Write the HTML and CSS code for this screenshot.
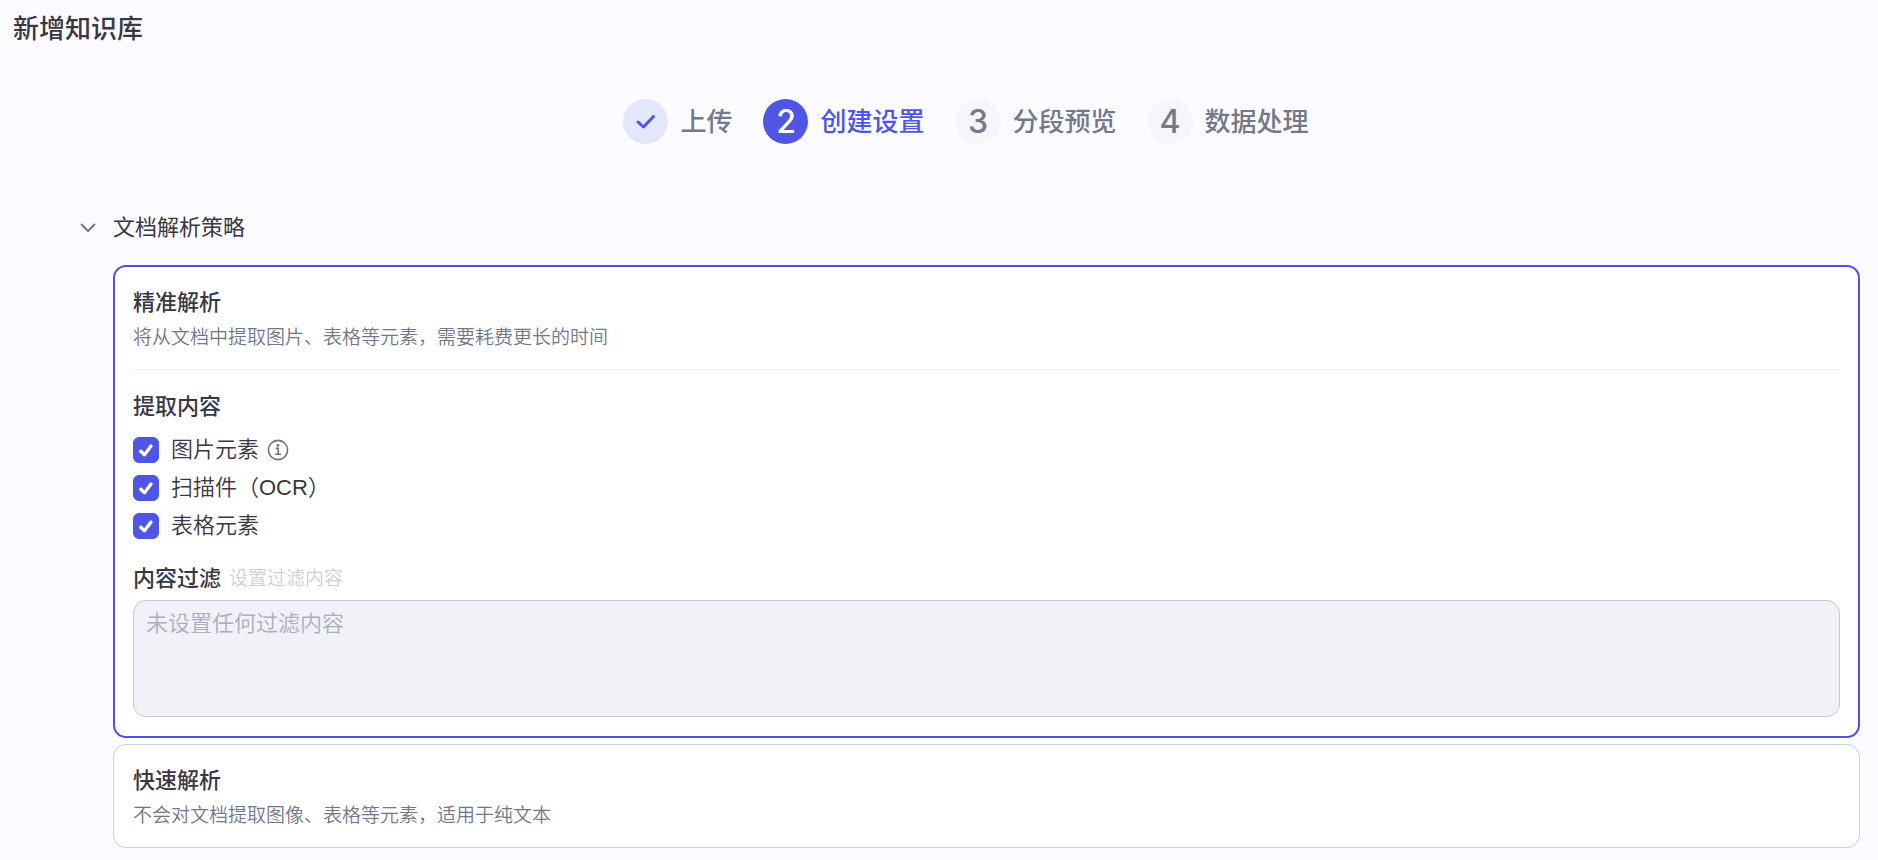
FILE: index.html
```html
<!DOCTYPE html>
<html lang="zh-CN">
<head>
    <meta charset="UTF-8">
    <meta name="viewport" content="width=device-width, initial-scale=1.0">
    <title>新增知识库</title>
    <link rel="stylesheet" href="styles.css">
</head>
<body>

<h1 class="page-title">新增知识库</h1>

<!-- Steps -->
<ol class="steps">
    <li class="step done">
        <span class="step-icon">
            <svg width="22" height="22" viewBox="0 0 22 22" fill="none" stroke="currentColor" stroke-width="3" stroke-linecap="round" stroke-linejoin="round"><path d="M3 11L8.5 16L18.5 5.5"/></svg>
        </span>
        <span>上传</span>
    </li>
    <li class="step active" aria-current="step">
        <span class="step-icon">2</span>
        <span>创建设置</span>
    </li>
    <li class="step">
        <span class="step-icon">3</span>
        <span>分段预览</span>
    </li>
    <li class="step">
        <span class="step-icon">4</span>
        <span>数据处理</span>
    </li>
</ol>

<main class="content">
    <h2 class="section-title">
        <button type="button" class="section-toggle" aria-expanded="true">
            <svg width="16" height="16" viewBox="0 0 16 16" fill="none" stroke="#6b7083" stroke-width="1.8" stroke-linecap="round" stroke-linejoin="round"><path d="M1.5 4.5L8 11L14.5 4.5"/></svg>
            文档解析策略
        </button>
    </h2>

    <div class="cards">
        <!-- Precise parsing -->
        <section class="card selected">
            <div class="card-header">
                <h3>精准解析</h3>
                <p>将从文档中提取图片、表格等元素，需要耗费更长的时间</p>
            </div>

            <h3 class="options-title">提取内容</h3>
            <div class="option">
                <input type="checkbox" id="imageElements" checked>
                <label for="imageElements">图片元素</label>
                <svg class="info" width="22" height="22" viewBox="0 0 22 22" fill="none" stroke="#6b7083" stroke-width="1.6"><circle cx="11" cy="11" r="9.6"/><path d="M8.6 9.4H11.2V15.2M8.2 15.2H14"/><circle cx="11" cy="6.4" r="1.4" fill="#6b7083" stroke="none"/></svg>
            </div>
            <div class="option">
                <input type="checkbox" id="scannedFiles" checked>
                <label for="scannedFiles">扫描件（OCR）</label>
            </div>
            <div class="option">
                <input type="checkbox" id="tableElements" checked>
                <label for="tableElements">表格元素</label>
            </div>

            <div class="filter-header">
                <label for="filterContent">内容过滤</label>
                <button type="button" class="filter-button" disabled>设置过滤内容</button>
            </div>
            <textarea id="filterContent" class="filter-content" placeholder="未设置任何过滤内容" disabled></textarea>
        </section>

        <!-- Fast parsing -->
        <section class="card">
            <h3>快速解析</h3>
            <p>不会对文档提取图像、表格等元素，适用于纯文本</p>
        </section>
    </div>
</main>

</body>
</html>
```

FILE: styles.css
```css
* {
    box-sizing: border-box;
}
body {
    margin: 0;
    padding: 9px 18px 12px 13px;
    background-color: #fcfbff;
    color: #383743;
    font-family: "Liberation Sans", "Noto Sans CJK SC", sans-serif;
    font-size: 22px;
    font-weight: 350;
    line-height: 34px;
}
h1, h2, h3, p {
    margin: 0;
}
h3 {
    font-size: 22px;
    font-weight: 500;
}
p {
    margin-top: 1px;
    color: #73778a;
    font-size: 19px;
}
button, textarea {
    font-family: inherit;
    font-weight: inherit;
}
.page-title {
    font-size: 26px;
    font-weight: 500;
    line-height: 40px;
}
.steps {
    display: flex;
    justify-content: center;
    gap: 31px;
    margin: 50px 0 0;
    padding: 0 0 0 59px;
    list-style: none;
    color: #73788a;
    font-size: 26px;
    font-weight: 500;
}
.step {
    display: flex;
    align-items: center;
    gap: 12px;
}
.step-icon {
    display: flex;
    align-items: center;
    justify-content: center;
    width: 45px;
    height: 45px;
    border-radius: 50%;
    background-color: #f5f5fa;
    font-family: Inter, sans-serif;
    font-size: 32px;
}
.step.done .step-icon {
    background-color: #e4e6fd;
    color: #4e56e3;
}
.step.active {
    color: #4e56e3;
}
.step.active .step-icon {
    background-color: #4e56e3;
    color: white;
}
.content {
    margin-top: 67px;
    padding-left: 67px;
}
.section-title {
    display: flex;
    font-weight: 400;
}
.section-toggle {
    display: flex;
    align-items: center;
    gap: 17px;
    padding: 0;
    border: none;
    background: none;
    color: #383743;
    font-size: 22px;
    line-height: 34px;
    cursor: pointer;
}
.cards {
    display: flex;
    flex-direction: column;
    gap: 6px;
    margin: 20px 0 0 33px;
}
.card {
    padding: 19px 19px 14px;
    border: 1px solid #cdd0dc;
    border-radius: 13px;
    background-color: white;
}
.card.selected {
    padding: 19px 18px;
    border: 2px solid #524fe6;
}
.card-header {
    padding-bottom: 14px;
    border-bottom: 1px solid #ececf0;
}
.options-title {
    margin: 20px 0 7px;
}
.option {
    display: flex;
    align-items: center;
    height: 38px;
}
.option input {
    display: grid;
    place-items: center;
    appearance: none;
    width: 26px;
    height: 26px;
    margin: 0 12px 0 0;
    border-radius: 6px;
    border: 1px solid #cdd0dc;
}
.option input:checked {
    border-color: #4e56e3;
    background-color: #4e56e3;
}
/* tick mark */
.option input:checked::before {
    content: "";
    width: 14px;
    height: 14px;
    background-color: white;
    clip-path: polygon(0 56%, 8% 46%, 18% 46%, 38% 66%, 77% 12%, 88% 9%, 97% 17%, 97% 27%, 46% 95%, 33% 95%, 0 64%);
}
.info {
    margin-left: 8px;
}
.filter-header {
    display: flex;
    align-items: center;
    gap: 8px;
    margin: 17px 0 4px;
}
.filter-header label {
    font-weight: 500;
}
.filter-button {
    padding: 0;
    border: none;
    background: none;
    color: #d0d0d6;
    font-size: 19px;
    line-height: 34px;
}
.filter-content {
    display: block;
    width: 100%;
    height: 117px;
    padding: 6px 12px;
    border: 1px solid #c6c8d4;
    border-radius: 13px;
    background-color: #f1f2f8;
    font-size: 22px;
    line-height: 34px;
    resize: none;
}
.filter-content::placeholder {
    color: #aaaec2;
}
```
